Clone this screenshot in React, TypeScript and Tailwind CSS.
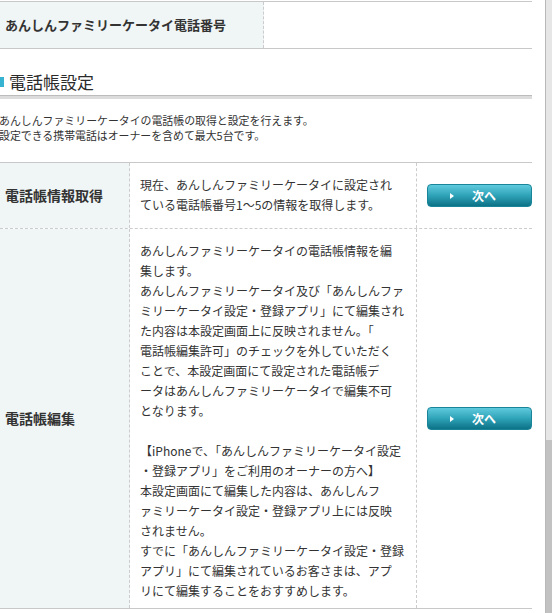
import React from "react";

const font = { fontFamily: '"Noto Sans CJK JP", "Noto Sans", sans-serif' };

const editLines = [
  "あんしんファミリーケータイの電話帳情報を編",
  "集します。",
  "あんしんファミリーケータイ及び「あんしんファ",
  "ミリーケータイ設定・登録アプリ」にて編集され",
  "た内容は本設定画面上に反映されません。「",
  "電話帳編集許可」のチェックを外していただく",
  "ことで、本設定画面にて設定された電話帳デ",
  "ータはあんしんファミリーケータイで編集不可",
  "となります。",
  "",
  "【iPhoneで、「あんしんファミリーケータイ設定",
  "・登録アプリ」をご利用のオーナーの方へ】",
  "本設定画面にて編集した内容は、あんしんフ",
  "ァミリーケータイ設定・登録アプリ上には反映",
  "されません。",
  "すでに「あんしんファミリーケータイ設定・登録",
  "アプリ」にて編集されているお客さまは、アプ",
  "リにて編集することをおすすめします。",
];

const NextButton: React.FC = () => (
  <button className="flex items-center w-[105px] h-[23px] rounded-[4px] border border-[#1a8599] bg-gradient-to-b from-[#5ecadd] via-[#2ea3b8] to-[#0b7287] text-white">
    <span className="ml-[22px] w-0 h-0 border-y-[3px] border-y-transparent border-l-[4px] border-l-white" />
    <span className="ml-[18px] text-[12px] font-bold leading-none">次へ</span>
  </button>
);

const Row: React.FC<{ label: string; lines: string[]; last?: boolean }> = ({ label, lines, last }) => (
  <div className={`flex ${last ? "border-b border-solid border-[#c8c8c8]" : "border-b border-dashed border-[#cccccc]"}`}>
    <div className="w-[130px] shrink-0 bg-[#f0f5f5] border-r border-dashed border-[#cccccc] flex items-center pl-[5px]">
      <span className="text-[14px] font-bold text-[#333]">{label}</span>
    </div>
    <div
      className={`w-[287px] shrink-0 border-r border-dashed border-[#cccccc] pl-[10px] pt-[12px] text-[12px] leading-[20px] text-[#333] ${
        last ? "pb-[7px]" : "pb-[13px]"
      }`}
    >
      {lines.map((l, i) => (
        <div key={i} className="whitespace-nowrap h-[20px]">
          {l}
        </div>
      ))}
    </div>
    <div className="flex-1 flex items-center pl-[10px]">
      <NextButton />
    </div>
  </div>
);

export default function App() {
  return (
    <div className="flex w-[552px] h-[613px] bg-white overflow-hidden" style={font}>
      <div className="w-[532px] shrink-0">
        {/* phone number row */}
        <div className="mt-[1px] flex h-[48px] border-y border-[#c8c8c8]">
          <div className="w-[264px] bg-[#f0f5f5] border-r border-dashed border-[#cccccc] flex items-center pl-[5px]">
            <span className="text-[13px] font-bold text-[#333]">あんしんファミリーケータイ電話番号</span>
          </div>
          <div className="flex-1" />
        </div>

        {/* heading */}
        <div className="pt-[21px]">
          <div className="flex items-center h-[24px]">
            <span className="w-[4px] h-[10px] bg-[#35b3d1] mr-[5px]" />
            <span className="text-[17px] leading-[24px] text-[#2b2b2b]">電話帳設定</span>
          </div>
          <div className="mt-[1px] h-[1px] bg-[#bcbcbc]" />
          <div className="h-[3px] bg-[#dcdcdc]" />
        </div>

        <div className="-ml-[1px] mt-[14px] text-[10.9px] leading-[15px] text-[#333]">
          <div className="whitespace-nowrap">あんしんファミリーケータイの電話帳の取得と設定を行えます。</div>
          <div className="whitespace-nowrap">設定できる携帯電話はオーナーを含めて最大5台です。</div>
        </div>

        <div className="mt-[19px] border-t border-[#c8c8c8]">
          <Row
            label="電話帳情報取得"
            lines={["現在、あんしんファミリーケータイに設定され", "ている電話帳番号1～5の情報を取得します。"]}
          />
          <Row label="電話帳編集" lines={editLines} last />
        </div>
      </div>
      <div className="ml-[13px] flex-1 flex flex-col border-l border-[#b8b8b8]">
        <div className="h-[440px] bg-[#e6e6e6]" />
        <div className="flex-1 bg-[#c2c2c2]" />
      </div>
    </div>
  );
}
